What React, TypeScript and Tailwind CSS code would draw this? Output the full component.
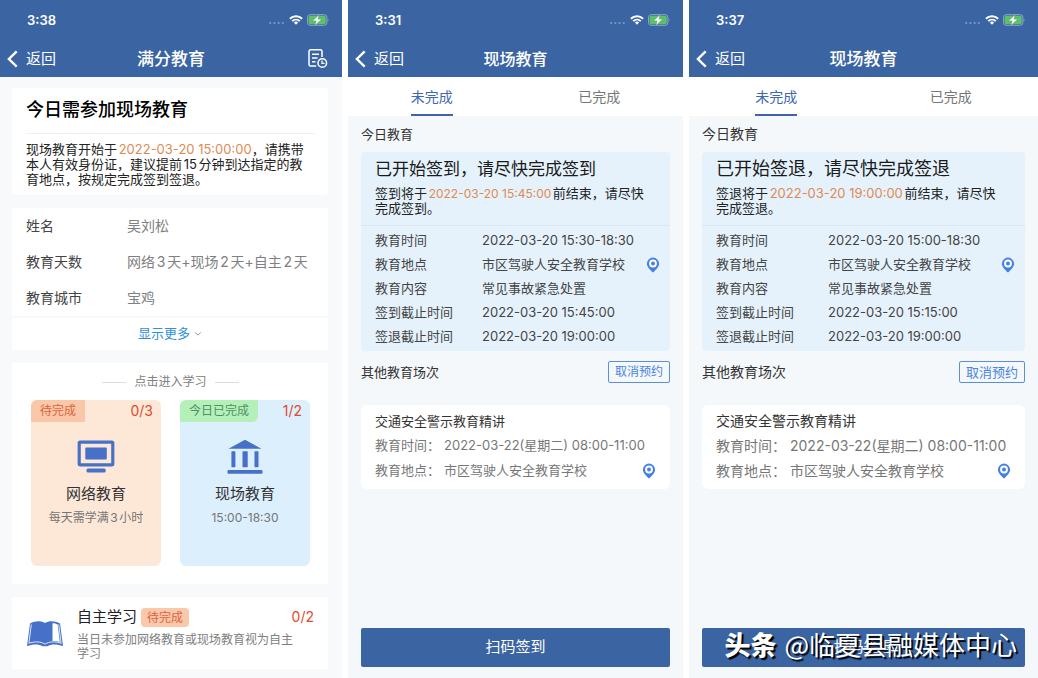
import React from "react";

type Row = { label: string; value: string; pin?: boolean };

function StatusBar({ time }: { time: string }) {
  return (
    <div className="flex h-10 items-center justify-between pl-[27px] pr-[13px]">
      <span className="text-[13px] font-semibold leading-5">{time}</span>
      <div className="flex items-center gap-1">
        <svg width="17" height="10" viewBox="0 0 17 10" aria-hidden="true" fill="#7f9bc6">
          <circle cx="2.2" cy="8" r="1.1" />
          <circle cx="6.4" cy="8" r="1.1" />
          <circle cx="10.6" cy="8" r="1.1" />
          <circle cx="14.8" cy="8" r="1.1" />
        </svg>
        <svg width="14" height="10" viewBox="0 0 14 10" aria-hidden="true" fill="none" stroke="#fff">
          <path d="M0.9 3.7a8.8 8.8 0 0 1 12.2 0" strokeWidth="2.1" />
          <path d="M3.2 6.1a5.5 5.5 0 0 1 7.6 0" strokeWidth="1.9" />
          <path d="M7 9.7 4.9 7.6a3 3 0 0 1 4.2 0z" fill="#fff" stroke="none" />
        </svg>
        <svg width="22" height="12" viewBox="0 0 22 12" aria-hidden="true">
          <rect x="0.5" y="0.7" width="19.4" height="10.6" rx="2.6" fill="none" stroke="#8fa6cb" />
          <rect x="1.6" y="1.8" width="17.2" height="8.4" rx="1.6" fill="#5cc267" />
          <path d="M20.7 4.3c1 .4 1 3 0 3.4z" fill="#8fa6cb" />
          <path d="M12.2 .6 5.4 6.9h3.6L7.9 11.5 14.8 5.1h-3.8z" fill="#fff" stroke="#4d9a6f" strokeWidth="0.5" />
        </svg>
      </div>
    </div>
  );
}

function Header({ time, title, titleClass, action }: { time: string; title: string; titleClass: string; action?: React.ReactNode }) {
  return (
    <header className="bg-[#3b64a2] text-white">
      <StatusBar time={time} />
      <div className="grid h-[37px] grid-cols-[1fr_auto_1fr] items-center px-[7px]">
        <button type="button" className="flex items-center gap-2 text-[15px] leading-5">
          <svg width="11" height="18" viewBox="0 0 11 18" fill="none" stroke="#fff" strokeWidth="2.4" aria-hidden="true">
            <path d="M9.7 1.3 1.9 9l7.8 7.7" />
          </svg>
          返回
        </button>
        <h1 className={titleClass}>{title}</h1>
        <div className="flex justify-end pr-[7px]">{action}</div>
      </div>
    </header>
  );
}

function RecordIcon() {
  return (
    <svg width="21" height="21" viewBox="0 0 21 21" fill="none" stroke="#fff" strokeWidth="1.5" aria-hidden="true">
      <path d="M9.2 18H3.6A1.6 1.6 0 0 1 2 16.4V3.3A1.6 1.6 0 0 1 3.6 1.7H13.4A1.6 1.6 0 0 1 15 3.3V9" />
      <path d="M5 6.2H12M5 10H10.5M5 13.8H8.5" />
      <circle cx="15.3" cy="15" r="4.3" />
      <path d="M15 12.6V15.3H17.6" strokeWidth="1.3" />
    </svg>
  );
}

function PinIcon() {
  return (
    <svg width="14" height="16" viewBox="0 0 14 16" aria-hidden="true">
      <path d="M7 .6a6.1 6.1 0 0 1 6.1 6.1c0 3.2-3.5 6.3-6.1 8.9C4.4 13 .9 9.9.9 6.7A6.1 6.1 0 0 1 7 .6z" fill="#4580e6" />
      <circle cx="7" cy="6.5" r="3.9" fill="#fff" />
      <circle cx="7" cy="6.5" r="2" fill="#4580e6" />
    </svg>
  );
}

function MonitorIcon() {
  return (
    <svg width="38" height="34" viewBox="0 0 38 34" aria-hidden="true">
      <rect x="2.2" y="2.2" width="33.6" height="22.6" rx="1" fill="none" stroke="#4770c8" strokeWidth="3.2" />
      <rect x="8.3" y="7.6" width="21.5" height="12" rx="1" fill="#4770c8" />
      <rect x="9.5" y="28.6" width="19.2" height="4" rx="1.5" fill="#4770c8" />
    </svg>
  );
}

function BankIcon() {
  return (
    <svg width="38" height="36" viewBox="0 0 38 36" aria-hidden="true" fill="#4770c8">
      <path d="M19 .8 35.5 9.8H2.5z" />
      <rect x="5.4" y="12.2" width="4" height="16" rx="0.6" />
      <rect x="16.5" y="12.2" width="5.2" height="16" rx="0.6" />
      <rect x="28.5" y="12.2" width="4" height="16" rx="0.6" />
      <rect x="1.5" y="31" width="35" height="3.8" rx="1" />
    </svg>
  );
}

function BookIcon() {
  return (
    <svg width="38" height="28" viewBox="0 0 38 28" aria-hidden="true">
      <path d="M4 3.5C9 .8 15 .6 19 3c4-2.4 10-2.2 15 .5l3 22.5c-6-2-12-2.3-15.5.3h-5C13 23.7 7 24 1 26z" fill="#4770c8" />
      <path d="M5.3 4.5 2.9 23.3c5.5-2 12-2 16.1.9 4.1-2.9 10.6-2.9 16.1-.9L32.7 4.5" fill="none" stroke="#dfe8fa" strokeWidth="1" />
      <path d="M26.5 3.2c2 0 3.8.5 5.2 1.2l2.1 17.5c-2.2-.7-4.8-1-7.3-.8z" fill="#fff" />
    </svg>
  );
}

function Tile({ tint, tag, tagClass, count, icon, title, note }: { tint: string; tag: string; tagClass: string; count: string; icon: React.ReactNode; title: string; note: string }) {
  return (
    <button type="button" className={tint}>
      <span className="flex w-full items-start justify-between">
        <span className={tagClass}>{tag}</span>
        <span className="pr-2 text-sm leading-[22px] text-[#e24a2c]">{count}</span>
      </span>
      <span className="mt-4 flex h-[38px] items-center">{icon}</span>
      <span className="mt-2 text-[15px] leading-5 text-[#333]">{title}</span>
      <span className="mt-1 text-xs leading-5 text-[#757575]">{note}</span>
    </button>
  );
}

function OverviewPanel() {
  const info: Row[] = [
    { label: "姓名", value: "吴刘松" },
    { label: "教育天数", value: "网络3天+现场2天+自主2天" },
    { label: "教育城市", value: "宝鸡" },
  ];
  return (
    <section className="flex min-h-screen flex-col bg-[#f7f9fb]">
      <Header
        time="3:38"
        title="满分教育"
        titleClass="text-[17px] font-medium leading-6"
        action={
          <button type="button" aria-label="学习记录">
            <RecordIcon />
          </button>
        }
      />
      <div className="flex flex-col gap-[13px] pb-2 pl-3 pr-3.5 pt-[11px]">
        <article className="rounded bg-white pb-2 pl-3.5 pr-[13px] pt-[9px]">
          <h2 className="border-b border-[#f0f0f0] pb-2.5 text-lg font-medium leading-[26px] text-black">今日需参加现场教育</h2>
          <p className="whitespace-nowrap pt-2 text-[13px] leading-[15px] text-[#222]">
            现场教育开始于<span className="text-[#e08a52]">2022-03-20 15:00:00</span>，请携带
            <br />
            本人有效身份证，建议提前15分钟到达指定的教
            <br />
            育地点，按规定完成签到签退。
          </p>
        </article>

        <article className="bg-white">
          <dl className="border-b-2 border-[#f7f9fb] pl-3.5">
            {info.map((row) => (
              <div key={row.label} className="grid h-9 grid-cols-[101px_1fr] items-center whitespace-nowrap text-sm">
                <dt className="text-[#444]">{row.label}</dt>
                <dd className="text-[#808080]">{row.value}</dd>
              </div>
            ))}
          </dl>
          <button type="button" className="flex h-8 w-full items-center justify-center gap-1 text-[13px] text-[#2f8fdd]">
            显示更多
            <svg width="8" height="6" viewBox="0 0 8 6" fill="none" stroke="#999" aria-hidden="true">
              <path d="m1.2 1.5 2.8 2.6 2.8-2.6" />
            </svg>
          </button>
        </article>

        <article className="bg-white pb-[18px] pl-[19px] pr-[18px] pt-[9px]">
          <h2 className="flex items-center justify-center gap-2 text-xs leading-5 text-[#808080]">
            <span className="h-px w-6 bg-[#ddd]" />
            点击进入学习
            <span className="h-px w-6 bg-[#ddd]" />
          </h2>
          <div className="mt-2 grid grid-cols-2 gap-[19px]">
            <Tile
              tint="flex h-[166px] flex-col items-center overflow-hidden rounded-md bg-[#fde8d8]"
              tag="待完成"
              tagClass="bg-[#f8c8a8] px-[9px] text-xs leading-[22px] text-[#e0623c]"
              count="0/3"
              icon={<MonitorIcon />}
              title="网络教育"
              note="每天需学满3小时"
            />
            <Tile
              tint="flex h-[166px] flex-col items-center overflow-hidden rounded-md bg-[#dceffd]"
              tag="今日已完成"
              tagClass="rounded-br-md bg-[#b4f0b8] px-[9px] text-xs leading-[22px] text-[#4f8f6a]"
              count="1/2"
              icon={<BankIcon />}
              title="现场教育"
              note="15:00-18:30"
            />
          </div>
        </article>

        <article className="flex items-center gap-[13px] bg-white pb-2 pl-3.5 pr-3.5 pt-2.5">
          <BookIcon />
          <div className="min-w-0 flex-1">
            <div className="flex items-center gap-1">
              <h2 className="text-[15px] leading-5 text-[#222]">自主学习</h2>
              <span className="rounded-sm bg-[#fac9ac] px-1.5 text-xs leading-[19px] text-[#e0623c]">待完成</span>
              <span className="ml-auto text-sm leading-5 text-[#e24a2c]">0/2</span>
            </div>
            <p className="mt-1.5 pr-4 text-xs leading-[14px] text-[#808080]">当日未参加网络教育或现场教育视为自主学习</p>
          </div>
        </article>
      </div>
    </section>
  );
}

type LessonProps = {
  time: string;
  titleClass: string;
  labelClass: string;
  headingClass: string;
  deadlineClass: string;
  rowClass: string;
  cancelClass: string;
  otherClass: string;
  heading: string;
  lead: string;
  deadline: string;
  tail: string;
  rows: Row[];
  submit: string;
  children?: React.ReactNode;
};

function LessonPanel(props: LessonProps) {
  return (
    <section className="flex min-h-screen flex-col bg-[#f5f8fa]">
      <Header time={props.time} title="现场教育" titleClass={props.titleClass} />
      <nav className="grid h-[39px] grid-cols-2 bg-white text-sm">
        <button type="button" className="flex justify-center text-[#4068b0]">
          <span className="flex h-full items-center border-b-2 border-[#4360b4] pt-0.5">未完成</span>
        </button>
        <button type="button" className="flex items-center justify-center text-[#777]">
          已完成
        </button>
      </nav>
      <div className="flex flex-1 flex-col px-[13px] pb-[11px] pt-2">
        <h2 className={props.labelClass}>今日教育</h2>
        <article className="mt-2 rounded bg-[#e5f2fc] pb-0.5">
          <div className="border-b border-[#d9e6f0] px-3.5 pb-[9px] pt-[5px]">
            <h3 className={props.headingClass}>{props.heading}</h3>
            <p className="mt-[5px] whitespace-nowrap text-[13px] leading-[15px] text-[#222]">
              {props.lead}
              <span className={props.deadlineClass}>{props.deadline}</span>
              前结束，请尽快
              <br />
              {props.tail}
            </p>
          </div>
          <dl className="flex flex-col pl-3.5 pr-2.5 pt-[3px] text-[13px] text-[#444]">
            {props.rows.map((row) => (
              <div key={row.label} className={props.rowClass}>
                <dt>{row.label}</dt>
                <dd className="flex items-center justify-between">
                  {row.value}
                  {row.pin && (
                    <button type="button" aria-label="查看地图">
                      <PinIcon />
                    </button>
                  )}
                </dd>
              </div>
            ))}
          </dl>
        </article>
        <div className="mt-2.5 flex items-center justify-between">
          <h2 className={props.labelClass}>其他教育场次</h2>
          <button type="button" className={props.cancelClass}>
            取消预约
          </button>
        </div>
        <article className="mt-[22px] rounded-md bg-white px-3.5 py-1.5">
          <h3 className={props.labelClass}>交通安全警示教育精讲</h3>
          <div className={props.otherClass}>
            <div className="flex h-[25px] items-center gap-1">
              <span>教育时间：</span>
              <span>2022-03-22(星期二) 08:00-11:00</span>
            </div>
            <div className="flex h-[25px] items-center gap-1">
              <span>教育地点：</span>
              <span>市区驾驶人安全教育学校</span>
              <button type="button" aria-label="查看地图" className="ml-auto">
                <PinIcon />
              </button>
            </div>
          </div>
        </article>
        <div className="relative mt-auto">
          <button type="button" className="h-[39px] w-full rounded-xs bg-[#3b64a2] text-[15px] text-white">
            {props.submit}
          </button>
          {props.children}
        </div>
      </div>
    </section>
  );
}

export default function App() {
  return (
    <main
      lang="zh-CN"
      className="grid min-h-screen grid-cols-[342fr_335fr_349fr] gap-1.5 bg-white font-['Inter','Noto_Sans_CJK_SC',sans-serif] [text-autospace:normal]"
    >
      <OverviewPanel />
      <LessonPanel
        time="3:31"
        titleClass="text-base font-medium leading-6"
        labelClass="text-[13px] leading-5 text-[#333]"
        headingClass="text-[17px] leading-6 text-[#1a1a1a]"
        deadlineClass="text-xs leading-[15px] text-[#e08a52]"
        rowClass="grid h-6 grid-cols-[107px_1fr] items-center whitespace-nowrap"
        cancelClass="rounded-xs border border-[#5a8ee0] px-1.5 text-xs leading-5 text-[#4a84e4]"
        otherClass="mt-0.5 whitespace-nowrap text-[13px] text-[#777]"
        heading="已开始签到，请尽快完成签到"
        lead="签到将于"
        deadline="2022-03-20 15:45:00"
        tail="完成签到。"
        rows={[
          { label: "教育时间", value: "2022-03-20 15:30-18:30" },
          { label: "教育地点", value: "市区驾驶人安全教育学校", pin: true },
          { label: "教育内容", value: "常见事故紧急处置" },
          { label: "签到截止时间", value: "2022-03-20 15:45:00" },
          { label: "签退截止时间", value: "2022-03-20 19:00:00" },
        ]}
        submit="扫码签到"
      />
      <LessonPanel
        time="3:37"
        titleClass="text-[17px] font-medium leading-6"
        labelClass="text-sm leading-5 text-[#333]"
        headingClass="text-lg leading-6 text-[#1a1a1a]"
        deadlineClass="text-[13px] leading-[15px] text-[#e08a52]"
        rowClass="grid h-6 grid-cols-[112px_1fr] items-center whitespace-nowrap"
        cancelClass="rounded-xs border border-[#5a8ee0] px-1.5 text-[13px] leading-5 text-[#4a84e4]"
        otherClass="mt-0.5 whitespace-nowrap text-sm text-[#777]"
        heading="已开始签退，请尽快完成签退"
        lead="签退将于"
        deadline="2022-03-20 19:00:00"
        tail="完成签退。"
        rows={[
          { label: "教育时间", value: "2022-03-20 15:00-18:30" },
          { label: "教育地点", value: "市区驾驶人安全教育学校", pin: true },
          { label: "教育内容", value: "常见事故紧急处置" },
          { label: "签到截止时间", value: "2022-03-20 15:15:00" },
          { label: "签退截止时间", value: "2022-03-20 19:00:00" },
        ]}
        submit="扫码签退"
      >
        <div className="pointer-events-none absolute inset-y-0 right-2 flex items-center gap-2 whitespace-nowrap pb-2 font-['Noto_Sans_CJK_SC',sans-serif] text-[26px] leading-8 text-white [text-autospace:no-autospace] [text-shadow:2px_2px_1px_#000]">
          <span className="font-black">头条</span>
          <span>@临夏县融媒体中心</span>
        </div>
      </LessonPanel>
    </main>
  );
}
